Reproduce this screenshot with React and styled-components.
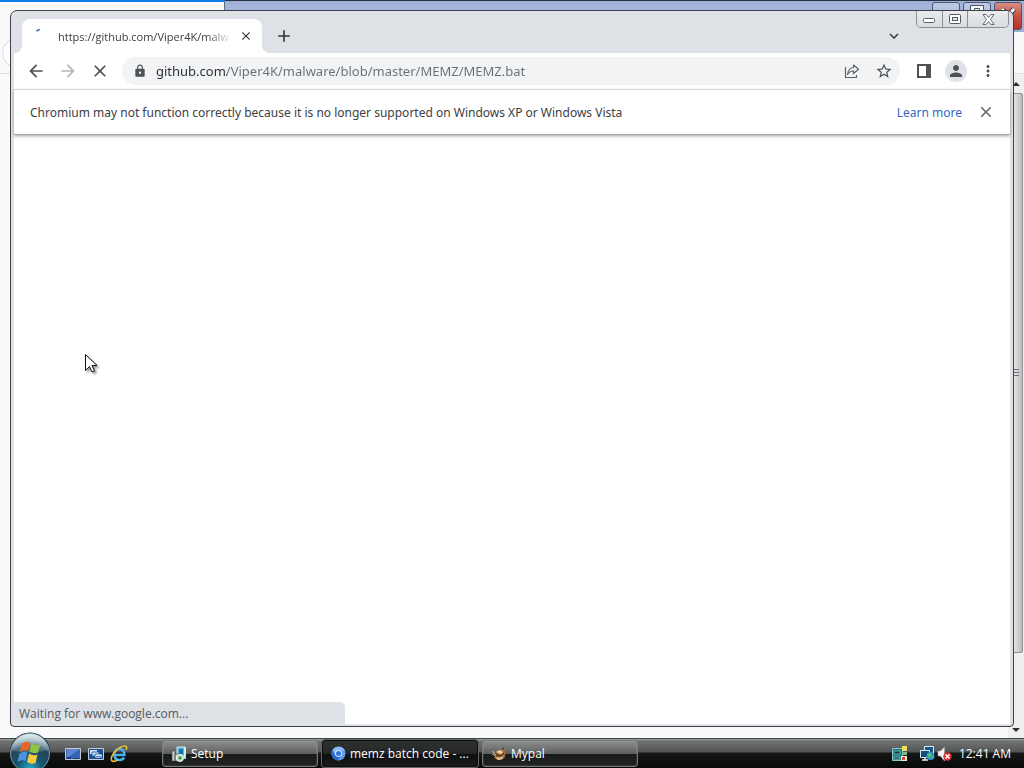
import React from "react";
import styled, { createGlobalStyle } from "styled-components";
import {
  MdArrowBack,
  MdArrowForward,
  MdClose,
  MdLock,
  MdStarBorder,
  MdPerson,
  MdMoreVert,
  MdAdd,
  MdExpandMore,
} from "react-icons/md";

const GlobalStyle = createGlobalStyle`
  * { box-sizing: border-box; }
  body { margin: 0; font-family: "Open Sans", "Noto Sans", sans-serif; font-size: 12px; color: #3c4043; }
  button, input { font: inherit; color: inherit; }
  svg { display: block; flex: none; }
`;

const Desktop = styled.div`
  min-height: 100vh;
  display: grid;
  grid-template-columns: minmax(0, 1fr);
  grid-template-rows: 1fr 30px;
  overflow: hidden;
`;

const Workspace = styled.main`
  display: grid;
  grid-template-columns: minmax(0, 1fr);
  grid-template-rows: minmax(0, 1fr);
  > * { grid-area: 1 / 1; }
`;

/* Mypal window, mostly covered */
const BackWindow = styled.section`
  display: grid;
  grid-template-rows: 32px 42px 1fr;
  background: #fafafb;
`;

const BackTitle = styled.div`
  display: flex;
`;

const BackTab = styled.div`
  width: 225px;
  border-top: 2px solid #0b7fe8;
  border-right: 1px solid #586a88;
  background: #fafafb;
`;

const BackCaption = styled.div`
  flex: 1;
  display: flex;
  justify-content: flex-end;
  gap: 3px;
  padding: 0 2px 0 0;
  border-top: 1px solid #26333f;
  background: linear-gradient(#9dacd2, #a5b4db 4px, #a0afd5);
`;

const BackCaptionButton = styled.button`
  width: 28px;
  height: 28px;
  margin-top: 1px;
  padding: 2px 0 0;
  display: flex;
  justify-content: center;
  border: 1px solid #48566f;
  border-radius: 3px;
  color: #fff;
  background: ${(p) => (p.$danger ? "linear-gradient(#d98e86, #c35145 50%, #b53224)" : "linear-gradient(#bdcae6, #9badd2)")};
`;

const BackToolbar = styled.div`
  border-bottom: 1px solid #e0dde2;
  display: flex;
  align-items: center;
  padding: 0 2px;
  overflow: hidden;
`;

const BackNav = styled.button`
  width: 36px;
  height: 30px;
  border: 1px solid #ddd6df;
  border-radius: 15px;
  background: #fff;
`;

const BackPage = styled.div`
  display: flex;
  justify-content: flex-end;
`;

const Scrollbar = styled.div`
  width: 16px;
  padding: 0 1px 2px 0;
  display: flex;
  flex-direction: column;
  align-items: stretch;
  background: #efeff0;
`;

const ScrollArrow = styled.button`
  height: 19px;
  padding: 0;
  border: 0;
  display: flex;
  align-items: ${(p) => (p.$down ? "flex-end" : "center")};
  justify-content: center;
  background: transparent;
  ${(p) => (p.$down ? "margin-top: auto; padding-bottom: 4px;" : "")}
`;

const Thumb = styled.div`
  flex: 0 1 560px;
  display: flex;
  align-items: center;
  justify-content: center;
  border: 1px solid #969696;
  border-radius: 2px;
  background: linear-gradient(90deg, #f4f4f4, #dedede 50%, #b9babc);
`;

/* Chromium window */
const Window = styled.section`
  margin: 10px 10px 11px;
  padding: 0 3px 2px;
  display: flex;
  flex-direction: column;
  min-width: 0;
  border: 1px solid #3c4147;
  border-radius: 7px 7px 4px 4px;
  background: #dee1e6;
  overflow: hidden;
`;

const TabStrip = styled.header`
  height: 42px;
  display: flex;
  padding-left: 8px;
`;

const Tab = styled.div`
  width: 240px;
  height: 34px;
  margin-top: 8px;
  padding: 0 2px 0 10px;
  display: flex;
  align-items: center;
  position: relative;
  border-radius: 8px 8px 0 0;
  background: #fff;
  &::before, &::after {
    content: "";
    position: absolute;
    bottom: 0;
    width: 8px;
    height: 8px;
  }
  &::before { left: -8px; background: radial-gradient(circle at 0 0, transparent 8px, #fff 8px); }
  &::after { right: -8px; background: radial-gradient(circle at 100% 0, transparent 8px, #fff 8px); }
`;

const TabTitle = styled.span`
  width: 174px;
  margin-left: 10px;
  font-size: 11px;
  white-space: nowrap;
  mask-image: linear-gradient(90deg, #000 150px, transparent);
`;

const IconButton = styled.button`
  width: ${(p) => p.$size || 32}px;
  height: ${(p) => p.$size || 32}px;
  flex: none;
  padding: 0;
  display: flex;
  align-items: center;
  justify-content: center;
  border: 0;
  border-radius: 50%;
  background: ${(p) => p.$fill || "transparent"};
  color: ${(p) => p.$tone || "#4d5156"};
`;

const NewTab = styled(IconButton)`
  margin: 9px auto 0 6px;
`;

const TabSearch = styled(IconButton)`
  margin: 9px 6px 0 0;
`;

const Caption = styled.div`
  height: 17px;
  margin-right: 1px;
  display: flex;
  border: 1px solid #8b9097;
  border-top: 0;
  border-radius: 0 0 5px 5px;
  overflow: hidden;
`;

const CaptionButton = styled.button`
  width: ${(p) => (p.$wide ? 41 : 25)}px;
  padding: 0;
  display: flex;
  align-items: center;
  justify-content: center;
  border: 0;
  border-left: ${(p) => (p.$first ? 0 : 1)}px solid #8b9097;
  background: linear-gradient(#e9ebee, #d9dce1);
`;

const Toolbar = styled.div`
  height: 37px;
  padding: 0 6px;
  display: flex;
  align-items: center;
  border-bottom: 1px solid #dcdee1;
  background: #fff;
`;

const Omnibox = styled.div`
  flex: 1;
  min-width: 0;
  height: 28px;
  margin: 0 8px 0 6px;
  padding-left: 11px;
  display: flex;
  align-items: center;
  border-radius: 14px;
  background: #f1f3f4;
`;

const Address = styled.input`
  flex: 1;
  min-width: 0;
  height: 24px;
  margin-left: 9px;
  padding: 0;
  border: 0;
  outline: 0;
  font-family: "Noto Sans", "Open Sans", sans-serif;
  font-size: 13px;
  color: transparent;
  background: linear-gradient(90deg, #2a2d31 71px, #6b6f74 71px);
  background-clip: text;
`;

const Infobar = styled.div`
  height: 45px;
  padding: 0 12px 0 16px;
  display: flex;
  align-items: center;
  gap: 12px;
  border-bottom: 1px solid #a6a8ab;
  background: #fff;
  box-shadow: 0 1px 3px #00000060;
  font-family: "Noto Sans", "Open Sans", sans-serif;
  z-index: 1;
`;

const Message = styled.span`
  flex: 1;
`;

const Link = styled.a`
  color: #3468c4;
  text-decoration: none;
`;

const Page = styled.div`
  flex: 1;
  display: flex;
  align-items: flex-end;
  background: #fff;
`;

const Status = styled.output`
  width: 331px;
  height: 22px;
  padding-left: 5px;
  line-height: 24px;
  border-radius: 0 5px 0 0;
  background: #dee1e6;
  color: #55595e;
`;

const Pointer = styled.svg`
  position: absolute;
  left: 84px;
  top: 353px;
  z-index: 5;
  filter: drop-shadow(2px 2px 1px #0006);
`;

/* Taskbar */
const Taskbar = styled.footer`
  display: flex;
  align-items: center;
  border-top: 1px solid #3f4843;
  padding: 0 13px 0 8px;
  color: #fff;
  background: linear-gradient(#a0a2a1, #717473 2px, #515453 13px, #151717 14px, #080909);
`;

const Start = styled.button`
  width: 44px;
  height: 36px;
  margin-top: -7px;
  padding: 0;
  align-self: flex-start;
  border: 0;
  background: transparent;
  z-index: 2;
`;

const QuickLaunch = styled.nav`
  display: flex;
  align-items: center;
  gap: 5px;
  margin: 0 34px 0 12px;
`;

const Launch = styled.button`
  width: 18px;
  height: 18px;
  padding: 0;
  border: 0;
  background: transparent;
`;

const Tasks = styled.div`
  flex: 1;
  display: flex;
  gap: 4px;
`;

const Task = styled.button`
  width: 156px;
  height: 27px;
  padding: 0 8px;
  display: flex;
  align-items: center;
  gap: 4px;
  border: 1px solid ${(p) => (p.$active ? "#0a0b0b" : "#777a79")};
  border-radius: 3px;
  box-shadow: ${(p) => (p.$active ? "0 0 0 1px #656867" : "inset 0 0 0 1px #ffffff14")};
  background: ${(p) => (p.$active ? "linear-gradient(#303232, #252727 50%, #0d0e0e 51%, #1a1b1b)" : "linear-gradient(#8d908f, #5d605f 50%, #181a1a 51%, #242626)")};
  color: #fff;
  white-space: nowrap;
`;

const Tray = styled.div`
  display: flex;
  align-items: center;
`;

const TrayIcons = styled.div`
  display: flex;
  align-items: center;
  gap: 1px;
  margin-right: 4px;
`;

const Gap = styled.span`
  width: 8px;
`;

const ShareIcon = () => (
  <svg width="18" height="18" viewBox="0 0 18 18" fill="none" stroke="#5f6368" strokeWidth="1.2">
    <path d="M2.500 5v10.500H13.500v-2.500" />
    <path d="M10.500 3 15.500 7.200l-5 4.300V9C7.500 9 6 10 4.500 12.500 5 8.500 7 5.800 10.500 5.500Z" strokeLinejoin="round" />
  </svg>
);

const PanelIcon = () => (
  <svg width="14" height="14" viewBox="0 0 14 14">
    <path fill="#4f5358" fillRule="evenodd" d="M0 0h14v14H0zM2 2v10h7V2z" />
  </svg>
);

const Spinner = () => (
  <svg width="16" height="16" viewBox="0 0 16 16" fill="none" stroke="#3b62c4" strokeWidth="1.5">
    <path d="M4.500 3.200Q5.800 1.900 7.800 1.600" />
  </svg>
);

const Orb = () => (
  <svg width="44" height="38" viewBox="0 0 44 38">
    <defs>
      <radialGradient id="orb" cx=".5" cy=".9" r=".8">
        <stop offset="0" stopColor="#29a8c9" />
        <stop offset=".4" stopColor="#17546f" />
        <stop offset=".75" stopColor="#254555" />
        <stop offset="1" stopColor="#a9bdc5" />
      </radialGradient>
      <linearGradient id="gloss" x2="0" y2="1">
        <stop stopColor="#e8f1f5" stopOpacity=".9" />
        <stop offset="1" stopColor="#8caebc" stopOpacity=".25" />
      </linearGradient>
    </defs>
    <circle cx="22" cy="21" r="20.500" fill="#101c22" />
    <circle cx="22" cy="21" r="19.500" fill="url(#orb)" stroke="#7899a8" />
    <path d="M4 18C5 8 12 2 22 2s17 6 18 16c-10 3-26 4-36 0Z" fill="url(#gloss)" />
    <path d="M14 11.500q4-3 8-1l-2 8.500q-4-2-8 1Z" fill="#e96424" />
    <path d="M23.500 11.500q4 2.500 9 .5l-2.500 8.500q-4 2-8.500-1Z" fill="#91c345" />
    <path d="M11.500 21.500q4-3 8-1l-2 8.500q-4-2-8 1Z" fill="#4c91df" />
    <path d="M21 21.500q4.500 3 8.500 1l-2 8.500q-4.500 2-8.500-1Z" fill="#fac83c" />
  </svg>
);

const DesktopIcon = () => (
  <svg width="18" height="18" viewBox="0 0 18 18">
    <path d="M1.500 3.500h15v11h-15z" fill="#3564b8" stroke="#c1c9d1" />
    <path d="M3 4h13L3 13z" fill="#5e86cf" />
    <path d="M3 12h4v2H3zM9 13h6v1H9z" fill="#1c387b" />
  </svg>
);

const SwitchIcon = () => (
  <svg width="18" height="18" viewBox="0 0 18 18">
    <path d="M1.500 3.500h15v11h-15z" fill="#1d4f94" stroke="#c1cdd8" />
    <path d="M3 5h7v4H3z" fill="#cfe6f7" />
    <path d="M5 7h7v4H5z" fill="#cfe6f7" stroke="#1d4f94" strokeWidth=".8" />
    <path d="M8 9h7v4H8z" fill="#e5f3fc" stroke="#1d4f94" strokeWidth=".8" />
    <path d="M9 11h5v1H9z" fill="#4b8bc9" />
  </svg>
);

const ExplorerIcon = () => (
  <svg width="18" height="18" viewBox="0 0 18 18" fill="none">
    <path d="M4.500 10h9.800c.3-4-1.600-6-4.800-6-3 0-5.200 2.300-5.200 5.500 0 3.400 2 5.500 5.200 5.500 2.100 0 3.700-1 4.500-2.500" stroke="#47b2ed" strokeWidth="2.600" />
    <path d="M2 16C-1 12 8 1 15 1c2 0 2 2 1 4M2 16c2 1 4 0 6-1" stroke="#efbd38" strokeWidth="1.600" />
  </svg>
);

const SetupIcon = () => (
  <svg width="16" height="16" viewBox="0 0 16 16">
    <path d="M6 1h8v10H6z" fill="#5cb5e5" stroke="#d5eef8" />
    <path d="M8 3h4v5H8z" fill="#1675ad" />
    <path d="M1 5h3v10H1zM4 8h3v7H4z" fill="#c8ced1" stroke="#394247" strokeWidth=".6" />
    <path d="M14 1v12" stroke="#f3f5f5" strokeWidth="1.500" />
    <circle cx="9" cy="12" r="3.500" fill="#b4dbb5" stroke="#f4f8f4" />
    <circle cx="9" cy="12" r="1.400" fill="#24934c" />
  </svg>
);

const ChromiumIcon = () => (
  <svg width="15" height="15" viewBox="0 0 16 16">
    <circle cx="8" cy="8" r="7.500" fill="#5e9af0" />
    <path d="M1 5A7.500 7.500 0 0 0 7 15.500L11 10 5 10Z" fill="#2c66cf" />
    <path d="M2 4A7.500 7.500 0 0 1 15 5H8L5 9Z" fill="#8bb9fa" />
    <circle cx="8" cy="8" r="3.600" fill="#e9f2ff" />
    <circle cx="8" cy="8" r="2.700" fill="#2e70d9" />
  </svg>
);

const MypalIcon = () => (
  <svg width="16" height="16" viewBox="0 0 16 16">
    <path d="M1 5l4 1 3-2 4 0 3-3-1 5c1 5-1 8-6 8-3 0-5-2-5-4l4 1-4-3Z" fill="#a66e3c" />
    <path d="M5 6l4-2 3 2-2 2-3-1ZM5 11l4 1 3-2-1 3-4 1Z" fill="#ecd3a7" />
    <path d="M6 9l4 1 3-3M4 7l3 2M11 3l2-1" stroke="#352018" fill="none" />
    <path d="M1 5l4 4M1 8l4 2" stroke="#b7bcc0" />
  </svg>
);

const DriveIcon = () => (
  <svg width="18" height="18" viewBox="0 0 18 18">
    <path d="M2.500 3.500h10v12h-10z" fill="#227b80" stroke="#83c9c5" />
    <path d="M4 6h6v3H4zM4 12h6v2H4z" fill="#123f4b" stroke="#8fdbd2" strokeWidth=".6" />
    <path d="M12 1h5v5h-5z" fill="#e9e45c" />
    <path d="M12 7h5v3h-5z" fill="#83b785" />
    <path d="M11 11h6v5h-6z" fill="#f5e4da" />
    <path d="M12 12h3v3h-3z" fill="#d5483c" />
  </svg>
);

const NetworkIcon = () => (
  <svg width="18" height="18" viewBox="0 0 18 18">
    <path d="M6.500 1.500h9v8h-9z" fill="#185587" stroke="#d6eef9" />
    <path d="M2.500 5.500h9v7h-9z" fill="#154c7c" stroke="#d6eef9" />
    <path d="M4 15h6M7 13v2" stroke="#e2eef4" strokeWidth="1.500" />
    <circle cx="12.500" cy="11" r="4" fill="#298fd2" />
    <path d="M9 9l4-1 1 3-3 2ZM13 12l3-1-1 3Z" fill="#57c264" />
  </svg>
);

const SpeakerIcon = () => (
  <svg width="18" height="18" viewBox="0 0 18 18">
    <path d="M1 6h2.500l4-4v14l-4-5H1Z" fill="#f2f4f5" stroke="#9da5a9" strokeWidth=".6" />
    <circle cx="10.500" cy="11.500" r="4.200" fill="#d93131" />
    <path d="M8.500 9.500l4 4m0-4-4 4" stroke="#fff" strokeWidth="1.500" />
  </svg>
);

export default function App() {
  return (
    <Desktop>
      <GlobalStyle />
      <Workspace>
        <BackWindow aria-label="Mypal">
          <BackTitle>
            <BackTab />
            <BackCaption>
              <BackCaptionButton aria-label="Minimize Mypal" />
              <BackCaptionButton aria-label="Restore Mypal">
                <svg width="14" height="11" viewBox="0 0 14 11"><path d="M.5.5h13v10H.5zM4.500 3.500h5v4h-5z" fill="#f5f6fa" stroke="#4b5365" /></svg>
              </BackCaptionButton>
              <BackCaptionButton $danger aria-label="Close Mypal">
                <svg width="22" height="20" viewBox="0 0 22 20"><path d="M5 4l10 12M17 4 6 16" stroke="#51383a" strokeWidth="5" /><path d="M5 4l10 12M17 4 6 16" stroke="#fff" strokeWidth="3" /></svg>
              </BackCaptionButton>
            </BackCaption>
          </BackTitle>
          <BackToolbar><BackNav aria-label="Back in Mypal" /></BackToolbar>
          <BackPage>
            <Scrollbar>
              <ScrollArrow aria-label="Scroll up"><svg width="8" height="4" viewBox="0 0 8 4"><path d="M0 4 4 0l4 4z" fill="#303236" /></svg></ScrollArrow>
              <Thumb><svg width="8" height="8" viewBox="0 0 8 8"><path d="M0 .5h7M0 3.500h7M0 6.500h7" stroke="#6d7074" /></svg></Thumb>
              <ScrollArrow $down aria-label="Scroll down"><svg width="8" height="4" viewBox="0 0 8 4"><path d="M0 0h8L4 4z" fill="#303236" /></svg></ScrollArrow>
            </Scrollbar>
          </BackPage>
        </BackWindow>

        <Window aria-label="Chromium">
          <TabStrip>
            <Tab>
              <Spinner />
              <TabTitle>https://github.com/Viper4K/malw</TabTitle>
              <IconButton $size={28} $tone="#34373b" aria-label="Close tab"><MdClose size={14} /></IconButton>
            </Tab>
            <NewTab $tone="#34373b" aria-label="New tab"><MdAdd size={20} /></NewTab>
            <TabSearch $tone="#34373b" aria-label="Search tabs"><MdExpandMore size={18} /></TabSearch>
            <Caption>
              <CaptionButton $first aria-label="Minimize"><svg width="13" height="7" viewBox="0 0 13 7"><rect x=".5" y="2.500" width="11" height="4" rx="1" fill="#fff" stroke="#5c6067" /></svg></CaptionButton>
              <CaptionButton aria-label="Maximize"><svg width="12" height="10" viewBox="0 0 12 10"><rect x=".5" y=".5" width="11" height="9" rx="1" fill="#fff" stroke="#565a61" /><rect x="3.500" y="3.500" width="5" height="3" fill="#e4e7eb" stroke="#565a61" /></svg></CaptionButton>
              <CaptionButton $wide aria-label="Close"><svg width="13" height="11" viewBox="0 0 13 11"><path d="M1 .5h3l2.500 3L9 .5h3L8.500 5.500l3.500 5H9l-2.500-3-2.500 3H1l3.500-5Z" fill="#fff" stroke="#656970" /></svg></CaptionButton>
            </Caption>
          </TabStrip>

          <Toolbar>
            <IconButton aria-label="Back"><MdArrowBack size={20} /></IconButton>
            <IconButton $tone="#b5b7ba" aria-label="Forward"><MdArrowForward size={20} /></IconButton>
            <IconButton aria-label="Stop loading"><MdClose size={20} /></IconButton>
            <Omnibox>
              <MdLock size={14} color="#4d5156" />
              <Address aria-label="Address" defaultValue="github.com/Viper4K/malware/blob/master/MEMZ/MEMZ.bat" />
              <IconButton aria-label="Share this page"><ShareIcon /></IconButton>
              <IconButton aria-label="Bookmark this tab"><MdStarBorder size={18} /></IconButton>
            </Omnibox>
            <IconButton aria-label="Side panel"><PanelIcon /></IconButton>
            <IconButton aria-label="Profile">
              <IconButton as="span" $size={22} $fill="#dee1e6"><MdPerson size={18} /></IconButton>
            </IconButton>
            <IconButton aria-label="Menu"><MdMoreVert size={18} /></IconButton>
          </Toolbar>

          <Infobar>
            <Message>Chromium may not function correctly because it is no longer supported on Windows XP or Windows Vista</Message>
            <Link href="#learn">Learn more</Link>
            <IconButton $size={24} $tone="#5f6368" aria-label="Dismiss"><MdClose size={18} /></IconButton>
          </Infobar>
          <Page><Status>Waiting for www.google.com...</Status></Page>
        </Window>
      </Workspace>

      <Taskbar>
        <Start aria-label="Start"><Orb /></Start>
        <QuickLaunch>
          <Launch aria-label="Show desktop"><DesktopIcon /></Launch>
          <Launch aria-label="Switch between windows"><SwitchIcon /></Launch>
          <Launch aria-label="Internet Explorer"><ExplorerIcon /></Launch>
        </QuickLaunch>
        <Tasks>
          <Task><SetupIcon />Setup</Task>
          <Task $active><ChromiumIcon />memz batch code - ...</Task>
          <Task><MypalIcon />Mypal</Task>
        </Tasks>
        <Tray>
          <TrayIcons><DriveIcon /><Gap /><NetworkIcon /><SpeakerIcon /></TrayIcons>
          <time>12:41 AM</time>
        </Tray>
      </Taskbar>

      <Pointer width="16" height="22" viewBox="0 0 16 22">
        <path d="M1.500 1.500v16l4-4 2.500 5.500 2.500-1-2.500-5.500h5Z" fill="#fff" stroke="#111" />
      </Pointer>
    </Desktop>
  );
}
